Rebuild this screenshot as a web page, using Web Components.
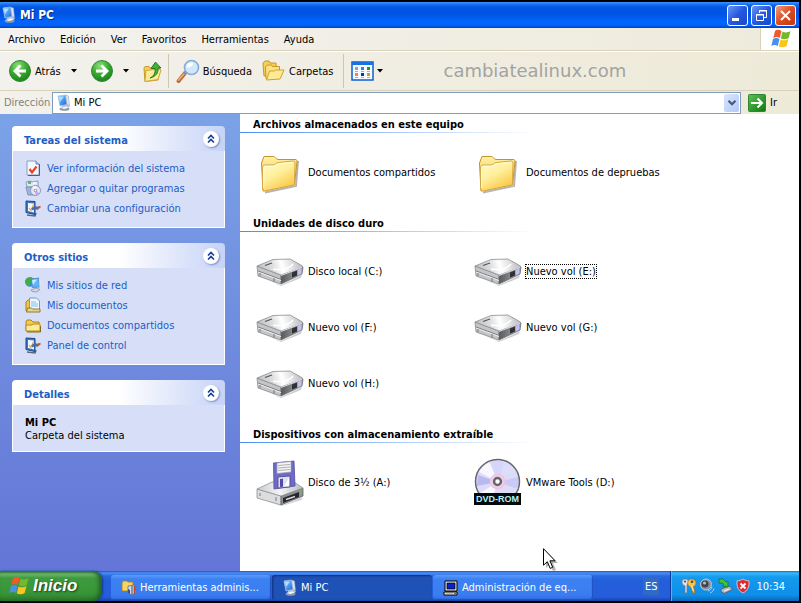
<!DOCTYPE html>
<html lang="es">
<head>
<meta charset="utf-8">
<meta name="viewport" content="width=device-width, initial-scale=1">
<title>Mi PC</title>
<style>
  body {
    margin: 0;
    background: #000;
    font: 11px/15px "DejaVu Sans Condensed", "DejaVu Sans", sans-serif;
    color: #000;
    cursor: default;
  }
</style>
</head>
<body>
<xp-desktop>
  <title-bar slot="window">Mi PC</title-bar>
  <menu-bar slot="window"></menu-bar>
  <tool-bar slot="window"></tool-bar>
  <address-bar slot="window"></address-bar>
  <explorer-view slot="window">
    <task-pane slot="side" heading="Tareas del sistema">
      <task-link icon="info">Ver información del sistema</task-link>
      <task-link icon="programs">Agregar o quitar programas</task-link>
      <task-link icon="settings">Cambiar una configuración</task-link>
    </task-pane>
    <task-pane slot="side" heading="Otros sitios">
      <task-link icon="network">Mis sitios de red</task-link>
      <task-link icon="documents">Mis documentos</task-link>
      <task-link icon="smallfolder">Documentos compartidos</task-link>
      <task-link icon="settings">Panel de control</task-link>
    </task-pane>
    <task-pane slot="side" heading="Detalles">
      <pane-details name="Mi PC">Carpeta del sistema</pane-details>
    </task-pane>

    <file-group heading="Archivos almacenados en este equipo">
      <file-item icon="folder">Documentos compartidos</file-item>
      <file-item icon="folder">Documentos de depruebas</file-item>
    </file-group>
    <file-group heading="Unidades de disco duro">
      <file-item icon="drive">Disco local (C:)</file-item>
      <file-item icon="drive" focused>Nuevo vol (E:)</file-item>
      <file-item icon="drive">Nuevo vol (F:)</file-item>
      <file-item icon="drive">Nuevo vol (G:)</file-item>
      <file-item icon="drive">Nuevo vol (H:)</file-item>
    </file-group>
    <file-group heading="Dispositivos con almacenamiento extraíble">
      <file-item icon="floppy">Disco de 3½ (A:)</file-item>
      <file-item icon="dvd">VMware Tools (D:)</file-item>
    </file-group>
  </explorer-view>

  <task-bar slot="taskbar">
    <task-button icon="tools">Herramientas adminis...</task-button>
    <task-button icon="computer" active>Mi PC</task-button>
    <task-button icon="oldpc">Administración de eq...</task-button>
  </task-bar>
</xp-desktop>

<script>
// Each entry: [width, height, svg content]
const ICONS = {
  computer: [16, 16, `
    <defs><linearGradient id="s" x1="0" y1="0" x2="1" y2="1"><stop offset="0" stop-color="#a9dcff"/><stop offset=".5" stop-color="#4a9bf2"/><stop offset="1" stop-color="#1f5fd0"/></linearGradient></defs>
    <ellipse cx="8.500" cy="14" rx="5" ry="1.800" fill="#8d98a8"/>
    <path d="M7 10l5-1 2 3-5 2-4-1z" fill="#b9c2d2"/>
    <path d="M2 1l7.500-1 1.500 9.500-7 1.500z" fill="url(#s)" stroke="#a9c2e8" stroke-width=".8"/>
    <path d="M9.500 0l3 1 1 9.500-2.500-1z" fill="#dfe6f2" stroke="#8797b5" stroke-width=".5"/>
    <path d="M3 2l5-.6L4 7z" fill="#d2f0ff" opacity=".7"/>
    <path d="M5 13l5-1.500 3 .8-5 1.800z" fill="#f4f6fa"/>`],
  flag: [20, 20, `
    <path d="M4 2C6 0 8 .5 10.500 2L8.800 9C6.500 7.600 4.500 7.600 2.300 9z" fill="#f0592b"/>
    <path d="M11.500 2.500c2.500 1.300 5 1.300 8-.5L17.700 9c-2.600 1.600-5 1.600-7.900.4z" fill="#76b82a"/>
    <path d="M2 10c2.200-1.400 4.300-1.300 6.500 0L6.800 17C4.600 15.600 2.500 15.600.3 17z" fill="#4a8fe8"/>
    <path d="M9.500 10.400c2.800 1.300 5.200 1.300 7.900-.4l-1.700 7c-2.700 1.600-5 1.600-7.900.5z" fill="#fbc51d"/>`],
  back: [24, 24, `
    <defs><radialGradient id="g" cx=".4" cy=".25" r=".8"><stop offset="0" stop-color="#8fe07a"/><stop offset=".5" stop-color="#38ab30"/><stop offset="1" stop-color="#187d18"/></radialGradient></defs>
    <circle cx="12" cy="12" r="10.500" fill="url(#g)" stroke="#35893a"/>
    <path d="M12.500 6.500L7 12l5.500 5.500M7.500 12H18" fill="none" stroke="#fff" stroke-width="2.800"/>`],
  forward: [24, 24, `
    <defs><radialGradient id="g" cx=".4" cy=".25" r=".8"><stop offset="0" stop-color="#8fe07a"/><stop offset=".5" stop-color="#38ab30"/><stop offset="1" stop-color="#187d18"/></radialGradient></defs>
    <circle cx="12" cy="12" r="10.500" fill="url(#g)" stroke="#35893a"/>
    <path d="M11.500 6.500L17 12l-5.500 5.500M16.500 12H6" fill="none" stroke="#fff" stroke-width="2.800"/>`],
  up: [20, 24, `
    <path d="M2 9l1-1.500h4l1 1.500 9-1 1 3-2 10-13 1.500z" fill="#f3cf57" stroke="#c79a26"/>
    <path d="M4 11.500L17 10l2 1-3 9.500-13 2z" fill="#fdeb9a" stroke="#d3a636"/>
    <path d="M8 19c4-2 5.500-5 5-9.500H9L13.500 3 19 9h-3c.5 5-2 8.500-8 10z" fill="#3fb238" stroke="#176b16" stroke-width=".8"/>`],
  search: [24, 24, `
    <path d="M9 14L2.500 22" stroke="#b06a3c" stroke-width="4" stroke-linecap="round"/>
    <path d="M9 13.500L2.500 21" stroke="#eda262" stroke-width="2" stroke-linecap="round"/>
    <path d="M11 12l-3 3" stroke="#7f93bb" stroke-width="3"/>
    <circle cx="15.500" cy="8.500" r="7" fill="#cfe9fb" stroke="#8aa8d8" stroke-width="1.600"/>
    <path d="M10.500 8a5 5 0 0 1 7-4c-1 3-3 5-7 4z" fill="#fff"/>`],
  folders: [24, 22, `
    <path d="M1 3l2-2h4l1 2h6v3L12 16H2z" fill="#f5cf56" stroke="#c99722"/>
    <path d="M3.500 7l2-2h4l1 1.500h7v4l-3 8H4z" fill="#fbe184" stroke="#c99722"/>
    <path d="M4.500 20l3-9h5l1-1 8.500 0-4 9z" fill="#fdea94" stroke="#d2a02c"/>`],
  views: [24, 20, `
    <rect x="1" y="1" width="21" height="18" fill="#f5faff" stroke="#0a5fd0" stroke-width="1.500"/>
    <rect x="1" y="1" width="21" height="3" fill="#1672e6"/>
    <path d="M4 6h3v3H4z" fill="#9a94d0"/><path d="M10 6h3v3h-3z" fill="#2b83e8"/><path d="M16 6h3v3h-3z" fill="#1c9a1c"/>
    <path d="M4 12h3v3H4z" fill="#ff7b4c"/><path d="M10 12h3v3h-3z" fill="#0d369c"/><path d="M16 12h3v3h-3z" fill="#d69c08"/>
    <path d="M4 10h3v1H4zm6 0h3v1h-3zm6 0h3v1h-3zM4 16h3v1H4zm6 0h3v1h-3zm6 0h3v1h-3z" fill="#a8b0ba"/>`],
  arrow: [6, 4, `<path d="M0 0h6L3 3.500z"/>`],
  combo: [8, 6, `<path d="M.5.800L4 4.300 7.500.8" fill="none" stroke="#3f577e" stroke-width="2"/>`],
  go: [18, 18, `
    <defs><linearGradient id="g" x1="0" y1="0" x2="1" y2="1"><stop offset="0" stop-color="#5cc254"/><stop offset="1" stop-color="#0f7713"/></linearGradient></defs>
    <rect x=".5" y=".5" width="17" height="17" rx="1" fill="url(#g)" stroke="#2b8a2f"/>
    <path d="M3 9h11M9.500 4.500L14 9l-4.500 4.500" fill="none" stroke="#fff" stroke-width="2"/>`],
  chevrons: [8, 10, `<path d="M1 4.500l3-3 3 3M1 8.500l3-3 3 3" fill="none" stroke="#163d9c" stroke-width="1.600"/>`],
  info: [16, 16, `
    <path d="M2 1h9l3 3v11H2z" fill="#f3f7ff" stroke="#8d9bc0"/><path d="M11 1v3h3" fill="#bcc9e8" stroke="#6f81ad"/>
    <path d="M14.500 4v11.500H3" fill="none" stroke="#4a5b86"/>
    <path d="M4.500 9l2.500 3.500 4.500-6" fill="none" stroke="#f04018" stroke-width="2.200"/>`],
  programs: [16, 16, `
    <path d="M1 2l4-1 2 1 6-1v6H2z" fill="#dfe8f5" stroke="#8ba0c6"/>
    <path d="M3 1h3v3H3z" fill="#6ab36c"/><path d="M8 2h3v2H8z" fill="#f6f6f6"/>
    <path d="M1 7h9v8H3z" fill="#9db6da" stroke="#7e94b9"/>
    <circle cx="10.500" cy="10.500" r="5" fill="#e6e4f8" stroke="#8f94bb"/>
    <path d="M10.500 10.500l-3-4h4z" fill="#fff"/><path d="M10.500 10.500l4 3-4 2z" fill="#b6aee6"/>
    <circle cx="10.500" cy="10.500" r="1.300" fill="#fff" stroke="#888"/>`],
  settings: [16, 16, `
    <path d="M2 15l8 1 1-3" fill="none" stroke="#56658a" stroke-width="1.500"/>
    <path d="M1 1l9 .5v13l-9-2z" fill="#3d76c9" stroke="#1c4587"/><path d="M3 3l6 .5v9L3 11z" fill="#f4f9ff"/>
    <path d="M4 8l2 2.500 2.500-6" fill="none" stroke="#dfb456" stroke-width="1.300"/>
    <path d="M7 9.500l3-2.500 2 1.500 2-1.500" fill="none" stroke="#4a6ba5" stroke-width="2.400"/>
    <path d="M12 8.500l3.500-2" stroke="#c8502c" stroke-width="1.600"/>`],
  network: [16, 16, `
    <circle cx="5" cy="5" r="4.800" fill="#3d8fe0"/><path d="M0 4c1-4 6-5 8-2.500L5 7 3 9C1 8 0 6 0 4z" fill="#3fae43"/>
    <path d="M6 2l8-1 .5 9-7 .5z" fill="#5fb4fa" stroke="#4b7cc6" stroke-width=".8"/><path d="M7 3l5-.6L8 8z" fill="#c6ebff"/>
    <path d="M14 1l1.500 1v8h-1z" fill="#e4e8f2"/>
    <path d="M6 13l5-2 4 1.500-3 2.500-5-.5z" fill="#cfd5e2" stroke="#707c98" stroke-width=".6"/>`],
  documents: [16, 16, `
    <path d="M1 5l2-2h3v11H1z" fill="#f0c748" stroke="#ad8018"/>
    <path d="M4.500 1h7l3 3v9h-10z" fill="#eff7ff" stroke="#6f9ace"/><path d="M6 5h5M6 7h7M6 9h7" stroke="#7cc0f0"/>
    <path d="M1.500 15l1-4h4l1 1h7.500v3z" fill="#e8d48a" stroke="#8f7a34"/>`],
  smallfolder: [16, 16, `
    <path d="M1 5l1-2h4l2 2h6v9H1z" fill="#f2ca4d" stroke="#b38216"/>
    <path d="M1 14V8h6l1-1h7v7z" fill="#fdea95" stroke="#b98a1f"/><path d="M2 15h13.500V9" fill="none" stroke="#8a6a16"/>`],
  tools: [16, 16, `
    <path d="M1 3l1-2h4l1 1h5v9H1z" fill="#f5d465" stroke="#a67f1c" stroke-width=".8"/>
    <path d="M7 6l7-1 1 8-4 2-4-2z" fill="#d6dbe5" stroke="#5d6a85" stroke-width=".8"/>
    <path d="M13.500 6v8" stroke="#c43f24" stroke-width="1.600"/><path d="M11 6v9" stroke="#5b76a4" stroke-width="1.400"/>
    <path d="M7 9l2 1v4l-2-1z" fill="#39568c"/>`],
  oldpc: [16, 16, `
    <path d="M2 1h12v10H2z" fill="#e9e7df" stroke="#000"/><path d="M4 3h8v6H4z" fill="#0b20c8" stroke="#000" stroke-width=".7"/>
    <path d="M1 12h13v3H1z" fill="#f2f0e8" stroke="#000"/><path d="M3 14h7" stroke="#888"/><path d="M11 13.500h2" stroke="#1a9a1a"/>`],
  keys: [16, 16, `
    <path d="M4 1c3 0 4 2 3.500 4L6 7v8H4V8C2 7 1 6 1 4s1-3 3-3z" fill="#dde1e8" stroke="#6d7686" stroke-width=".7"/>
    <circle cx="4" cy="3.500" r="1.100" fill="#47526b"/>
    <path d="M10.500 1c3 0 4.500 2 4.500 4s-1 3-2.500 3.500L14 15h-2L9.500 9C7.500 8 6.500 6.500 6.700 4.500 7 2 8.500 1 10.500 1z" fill="#f5c252" stroke="#9a6a1c" stroke-width=".7"/>
    <circle cx="11" cy="3.800" r="1.300" fill="#5a4a38"/><path d="M10.500 7l2 6" stroke="#fff0bd" stroke-width=".8"/>`],
  sound: [16, 16, `
    <circle cx="7" cy="6.500" r="5.500" fill="#8c929c" stroke="#c2c8d1"/><circle cx="6" cy="6" r="3.600" fill="#3f4651"/>
    <circle cx="5.500" cy="5" r="1.600" fill="#b6bcc7"/><path d="M9 13c2-.4 3.500-2 4-4M11 15c2-.6 3.600-2.400 4-4.500" fill="none" stroke="#b9cdf8"/>`],
  eject: [16, 16, `
    <path d="M4 11l8-3 3 2v2l-8 3.500-3-2z" fill="#aeb5bf" stroke="#4c5561" stroke-width=".8"/><path d="M7 13l5-2" stroke="#fff"/>
    <path d="M2 1h4l3 3 2-1v6L5.500 8 7 6.500 5 5H2z" fill="#42c438" stroke="#187318" stroke-width=".8"/>`],
  shield: [16, 16, `
    <path d="M8 1C10 2.300 12 2.900 14 2.800 14.500 9 12.500 12.700 8 15 3.500 12.700 1.500 9 2 2.800 4 2.900 6 2.300 8 1z" fill="#e02c30" stroke="#f6cfd0" stroke-width=".8"/>
    <path d="M5.500 5.500l5 5m0-5l-5 5" stroke="#fff" stroke-width="1.800"/>`],
  folder: [48, 48, `
    <defs><linearGradient id="f" x1="0" y1="0" x2=".6" y2="1"><stop offset="0" stop-color="#fffbc8"/><stop offset=".5" stop-color="#fff09e"/><stop offset="1" stop-color="#fbc844"/></linearGradient>
    <linearGradient id="b" x1="0" y1="0" x2="0" y2="1"><stop offset="0" stop-color="#fff2a6"/><stop offset="1" stop-color="#edb62f"/></linearGradient></defs>
    <path d="M9 44.500L40 38l2-25" fill="none" stroke="#777" stroke-width="2" opacity=".55"/>
    <path d="M5.500 15L8 8.500h9.500c1.500 0 2.500 2.500 4.500 3h17c1.500 0 2 .5 2 2L38.500 36.500 7 43z" fill="url(#b)" stroke="#bf922f"/>
    <path d="M6.500 20c0-2 1-3 3-3H17c2 0 3-2.500 5.500-2.500L37 13c1.500 0 2 .5 2 2l-.5 20.500c0 1-.5 1.500-1.500 1.700L8.500 43c-1 0-1.500-.5-1.500-1.500z" fill="url(#f)" stroke="#d8a63c"/>
    <path d="M7.700 40V20c0-1 1-1.700 2-1.700h8c2 0 3-2.300 5-2.500l14-1.300" fill="none" stroke="#fffde6"/>`],
  drive: [48, 48, `
    <defs><linearGradient id="t" x1="0" y1=".5" x2="1" y2=".4"><stop offset="0" stop-color="#bfc0c2"/><stop offset=".35" stop-color="#dedfe0"/><stop offset=".55" stop-color="#fff"/><stop offset=".8" stop-color="#dcdcde"/><stop offset="1" stop-color="#b9bbbe"/></linearGradient>
    <linearGradient id="r" x1="0" x2="1"><stop offset="0" stop-color="#56585c"/><stop offset=".5" stop-color="#85878b"/><stop offset="1" stop-color="#8d8e9c"/></linearGradient></defs>
    <path d="M4 29l21 9 21-10-1 3-20 8z" fill="#888" opacity=".4"/>
    <path d="M1 19l24 9v9L2 29z" fill="#c4c5c7" stroke="#898b8e" stroke-width=".8"/>
    <path d="M25 28l22-8-1 7-21 10z" fill="url(#r)" stroke="#6d6f74" stroke-width=".8"/>
    <path d="M1 19l16-6.500L34 12l12.500 7v1.500L25 28z" fill="url(#t)" stroke="#8b8d90" stroke-width=".8"/>
    <path d="M2 24l23 8.500" stroke="#77797d"/><path d="M2 25l23 8.500" stroke="#eeeeef"/>
    <path d="M25 28.500l21-8" stroke="#dcdde0"/>
    <path d="M36 25.500l5-2v5l-5 2z" fill="#303137"/><path d="M41.500 23l4-1.500v5l-4 2z" fill="#c3c0f2"/>
    <path d="M9 18.500l7-2.500" stroke="#515357" stroke-width="1.200"/><path d="M17 22c8 1.500 16 0 20-5" fill="none" stroke="#fff" stroke-width="1.500"/>
    <path d="M4 26v3M18 31v4" stroke="#77797d"/>`],
  floppy: [48, 48, `
    <defs><linearGradient id="t" x1="0" x2="1"><stop offset="0" stop-color="#c9cbcd"/><stop offset=".5" stop-color="#f5f5f6"/><stop offset="1" stop-color="#b9bbbf"/></linearGradient></defs>
    <path d="M4 41l21 7 22-9-2 3-19 6z" fill="#888" opacity=".4"/>
    <path d="M1 31l24 7v9L1 40z" fill="#dcddde" stroke="#8d8f92" stroke-width=".8"/>
    <path d="M25 38l22-8v8L25 47z" fill="#8f9195" stroke="#606267" stroke-width=".8"/>
    <path d="M1 31l15-7h22l9 6-22 8z" fill="url(#t)" stroke="#929498" stroke-width=".8"/>
    <path d="M27 40l16-6v5l-16 6z" fill="#26272c"/><path d="M30 41.500l9-3" stroke="#d4d6d9" stroke-width="1.500"/><circle cx="44.500" cy="33" r="1" fill="#4cd63c"/>
    <path d="M4 35v3M20 39v4" stroke="#7b7d80"/>
    <path d="M17.500 5L38 3l1 25-21 3z" fill="#6f6bc8" stroke="#504c9c" stroke-width=".8"/>
    <path d="M21 5l14-1.500V14l-14 1.500z" fill="#f6f6f6" stroke="#9c9cb2" stroke-width=".7"/>
    <path d="M22 7.500l12-1M22 10l12-1M22 12.500l12-1" stroke="#b0b0b4"/>
    <path d="M22 19l12-1v11l-12 1z" fill="#dfe0ee" stroke="#4a458c" stroke-width=".8"/><path d="M24 21l3-.3v8l-3 .3z" fill="#514ca8"/><path d="M28 28l5-8v7.500z" fill="#fff"/>`],
  dvd: [48, 48, `
    <circle cx="23.500" cy="23.500" r="22" fill="#dcdcf7" stroke="#65666c" stroke-width="1.500"/>
    <path d="M24 24L5 14a21 21 0 0 1 11-9.500z" fill="#f7f8ff"/><path d="M24 24L30 4a21 21 0 0 1 11 8z" fill="#dddcfb"/>
    <path d="M24 24L16 4.500a21 21 0 0 1 14-1z" fill="#d6d5fa"/><path d="M24 24L4 17 3 28z" fill="#b9b8f3"/><path d="M24 24l20-5v12z" fill="#cbcaf7"/>
    <path d="M24 24L6 35h14z" fill="#f8f8ff"/>
    <circle cx="23.500" cy="23.500" r="7" fill="#ead7ef" stroke="#f4bfe0" stroke-width="1.500"/><circle cx="23.500" cy="23.500" r="3.500" fill="#fff" stroke="#666" stroke-width="2.500"/>
    <rect y="35" width="47" height="12" fill="#04090c"/>
    <text x="23.500" y="44" text-anchor="middle" font-family="Liberation Sans, Arial, sans-serif" font-size="9" font-weight="700" fill="#b5f0f4">DVD-ROM</text>`],
  pointer: [16, 24, `
    <path d="M3 3v17l4-4 3 7 3-1-3-7h5z" fill="#000" opacity=".3"/>
    <path d="M.5.700v16.500l3.800-3.500 2.900 6.700 2.500-1.100-2.800-6.500h5.200z" fill="#fff" stroke="#000"/>`]
};

class XpIcon extends HTMLElement {
  connectedCallback() {
    if (this.shadowRoot) return;
    const [w, h, body] = ICONS[this.getAttribute('name')];
    this.attachShadow({ mode: 'open' }).innerHTML = `
      <style>
        :host { display: inline-flex; flex: none; }
        svg { display: block; overflow: visible; }
      </style>
      <svg width="${w}" height="${h}" viewBox="0 0 ${w} ${h}" aria-hidden="true">${body}</svg>
    `;
  }
}

// Small helper base: subclasses return their markup from render()
class XpElement extends HTMLElement {
  connectedCallback() {
    if (this.shadowRoot) return;
    this.attachShadow({ mode: 'open' }).innerHTML = `
      <style>
        button, input, a { font: inherit; color: inherit; margin: 0; }
        button { border: 0; padding: 0; background: none; }
        a { text-decoration: none; }
      </style>
      ${this.render()}
    `;
  }
}

class XpDesktop extends XpElement {
  render() {
    return `
      <style>
        :host {
          display: flex;
          flex-direction: column;
          box-sizing: border-box;
          min-height: 100vh;
          padding: 2px 2px 2px 0;
        }
        main { display: flex; flex-direction: column; flex: 1; }
      </style>
      <main><slot name="window"></slot></main>
      <slot name="taskbar"></slot>
    `;
  }
}

class TitleBar extends XpElement {
  render() {
    return `
      <style>
        :host {
          display: flex;
          align-items: center;
          gap: 3px;
          height: 26px;
          padding: 0 3px 0 1px;
          background: linear-gradient(#3d95ff 0, #1068ee 3px, #0055e0 6px, #0054e3 12px, #0066ff 20px, #0064fa 23px, #0042c0 26px);
        }
        h1 {
          flex: 1;
          margin: 0;
          font-size: 12px;
          line-height: 16px;
          color: #fff;
          text-shadow: 1px 1px #0a2a7c;
        }
        button {
          width: 21px;
          height: 21px;
          box-sizing: border-box;
          border: 1px solid #fff;
          border-radius: 3px;
          background: linear-gradient(135deg, #6d96f4, #2558e0 50%, #1a48c8);
        }
        .close { background: linear-gradient(135deg, #f0a080, #dd4a22 50%, #c03610); }
        svg { display: block; fill: none; stroke: #fff; }
      </style>
      <xp-icon name="computer"></xp-icon>
      <h1><slot></slot></h1>
      <button aria-label="Minimizar"><svg width="19" height="19"><path d="M4 13.500h7" stroke-width="3"/></svg></button>
      <button aria-label="Restaurar"><svg width="19" height="19"><path d="M7.500 7V4.500h7v7H12M7 5h8M4.500 8.500h7v6h-7zM4 9h8"/></svg></button>
      <button class="close" aria-label="Cerrar"><svg width="19" height="19"><path d="M5 5l9 9m0-9l-9 9" stroke-width="2"/></svg></button>
    `;
  }
}

class MenuBar extends XpElement {
  render() {
    const items = ['Archivo', 'Edición', 'Ver', 'Favoritos', 'Herramientas', 'Ayuda'];
    return `
      <style>
        :host {
          display: flex;
          height: 22px;
          border-bottom: 1px solid #d8d2bd;
          background: linear-gradient(90deg, #f3f2ef, #eeeadb);
        }
        nav { display: flex; flex: 1; gap: 15px; padding-left: 8px; }
        .logo {
          display: flex;
          align-items: center;
          width: 28px;
          padding-left: 10px;
          border-left: 1px solid #d8d2bd;
          background: #fff;
        }
      </style>
      <nav>${items.map(i => `<button>${i}</button>`).join('')}</nav>
      <div class="logo"><xp-icon name="flag"></xp-icon></div>
    `;
  }
}

class ToolBar extends XpElement {
  render() {
    return `
      <style>
        :host {
          display: flex;
          align-items: center;
          height: 38px;
          padding-left: 8px;
          border-top: 1px solid #fff;
          border-bottom: 1px solid #d8d2bd;
          background: linear-gradient(90deg, #f2f1ec, #eeead8);
        }
        button { display: flex; align-items: center; gap: 3px; height: 24px; }
        .label { padding-right: 4px; }
        .label + .label { margin-left: 6px; }
        .drop { width: 6px; justify-content: center; margin: 0 13px 0 9px; }
        .label + .drop { margin-left: 6px; }
        .view { margin: 0 0 0 2px; }
        hr { width: 1px; height: 34px; margin: 0 7px 0 6px; border: 0; background: #cdc8b2; }
        .mark {
          margin-left: 60px;
          font: 18px/22px "DejaVu Sans", sans-serif;
          color: #a3a3a0;
        }
      </style>
      <button class="label"><xp-icon name="back"></xp-icon>Atrás</button>
      <button class="drop" aria-label="Historial atrás"><xp-icon name="arrow"></xp-icon></button>
      <button aria-label="Adelante"><xp-icon name="forward"></xp-icon></button>
      <button class="drop" aria-label="Historial adelante"><xp-icon name="arrow"></xp-icon></button>
      <button aria-label="Arriba"><xp-icon name="up"></xp-icon></button>
      <hr>
      <button class="label"><xp-icon name="search"></xp-icon>Búsqueda</button>
      <button class="label"><xp-icon name="folders"></xp-icon>Carpetas</button>
      <hr>
      <button aria-label="Vistas"><xp-icon name="views"></xp-icon></button>
      <button class="drop view" aria-label="Elegir vista"><xp-icon name="arrow"></xp-icon></button>
      <span class="mark">cambiatealinux.com</span>
    `;
  }
}

class AddressBar extends XpElement {
  render() {
    return `
      <style>
        :host {
          display: flex;
          align-items: center;
          height: 23px;
          padding-left: 4px;
          background: linear-gradient(90deg, #f2f1ec, #eeead8);
        }
        label { width: 48px; color: #85827a; }
        .combo {
          display: flex;
          align-items: center;
          flex: 1;
          box-sizing: border-box;
          height: 22px;
          padding: 1px 1px 1px 3px;
          border: 1px solid #7f9db9;
          background: #fff;
        }
        input { flex: 1; min-width: 0; padding: 0 0 0 2px; border: 0; outline: 0; background: none; }
        .drop {
          display: flex;
          align-items: center;
          justify-content: center;
          width: 15px;
          height: 18px;
          border-radius: 2px;
          background: linear-gradient(135deg, #dbe6fe, #b2c8f7);
        }
        .go { display: flex; align-items: center; gap: 4px; width: 51px; margin-left: 7px; }
      </style>
      <label for="address">Dirección</label>
      <div class="combo">
        <xp-icon name="computer"></xp-icon>
        <input id="address" type="text" value="Mi PC">
        <button class="drop" aria-label="Mostrar lista"><xp-icon name="combo"></xp-icon></button>
      </div>
      <button class="go"><xp-icon name="go"></xp-icon>Ir</button>
    `;
  }
}

class ExplorerView extends XpElement {
  render() {
    return `
      <style>
        :host { display: flex; flex: 1; background: #fff; }
        aside {
          display: flex;
          flex-direction: column;
          gap: 15px;
          box-sizing: border-box;
          width: 240px;
          padding: 12px 15px 12px 12px;
          background: linear-gradient(#7ba2e7, #6375d6);
        }
        section { position: relative; flex: 1; padding-top: 3px; }
        .pointer { position: absolute; left: 303px; top: 434px; }
      </style>
      <aside><slot name="side"></slot></aside>
      <section>
        <slot></slot>
        <xp-icon class="pointer" name="pointer"></xp-icon>
      </section>
    `;
  }
}

class TaskPane extends XpElement {
  render() {
    return `
      <style>
        :host { display: block; }
        header {
          display: flex;
          align-items: center;
          justify-content: space-between;
          height: 25px;
          padding: 0 6px 0 12px;
          border-radius: 4px 4px 0 0;
          background: linear-gradient(90deg, #fff 50%, #c6d3f7);
        }
        h2 { margin: 0; padding-top: 3px; font-size: 11px; color: #215dc6; }
        button {
          display: flex;
          align-items: center;
          justify-content: center;
          width: 16px;
          height: 16px;
          border-radius: 50%;
          background: #fff;
          box-shadow: 1px 1px 2px #7b8fc0;
        }
        .body {
          padding: 7px 11px 9px;
          border: 1px solid #fff;
          border-top: 0;
          background: #d6dff7;
        }
      </style>
      <header>
        <h2>${this.getAttribute('heading')}</h2>
        <button aria-label="Contraer"><xp-icon name="chevrons"></xp-icon></button>
      </header>
      <div class="body"><slot></slot></div>
    `;
  }
}

class TaskLink extends XpElement {
  render() {
    return `
      <style>
        :host { display: block; }
        a { display: flex; align-items: center; gap: 6px; height: 20px; padding-left: 1px; color: #215dc6; white-space: nowrap; }
      </style>
      <a href="#"><xp-icon name="${this.getAttribute('icon')}"></xp-icon><span><slot></slot></span></a>
    `;
  }
}

class PaneDetails extends XpElement {
  render() {
    return `
      <style>
        :host { display: block; padding: 4px 1px 0; line-height: 13px; }
        strong { display: block; }
      </style>
      <strong>${this.getAttribute('name')}</strong>
      <slot></slot>
    `;
  }
}

class FileGroup extends XpElement {
  render() {
    return `
      <style>
        :host { display: block; margin-bottom: 16px; }
        h2 {
          margin: 0 0 11px;
          padding: 0 0 1px 13px;
          font-size: 11px;
          background: linear-gradient(90deg, #4a8df0, #fff 296px) bottom / 100% 1px no-repeat;
        }
        .items { display: grid; grid-template-columns: repeat(2, 218px); grid-auto-rows: 56px; padding-left: 16px; }
      </style>
      <h2>${this.getAttribute('heading')}</h2>
      <div class="items"><slot></slot></div>
    `;
  }
}

class FileItem extends XpElement {
  render() {
    return `
      <style>
        :host { display: flex; align-items: center; }
        a { display: flex; align-items: center; gap: 3px; white-space: nowrap; }
        span { padding: 0 1px; }
        :host([focused]) span { outline: 1px dotted #000; outline-offset: -1px; }
      </style>
      <a href="#"><xp-icon name="${this.getAttribute('icon')}"></xp-icon><span><slot></slot></span></a>
    `;
  }
}

class TaskBar extends XpElement {
  render() {
    return `
      <style>
        :host {
          display: flex;
          height: 30px;
          background: linear-gradient(#1f52c8 0, #4a90f5 2px, #2a68e0 5px, #245edb 10px, #245edb 26px, #1941a5 30px);
          color: #fff;
        }
        .start {
          display: flex;
          align-items: center;
          gap: 4px;
          box-sizing: border-box;
          width: 102px;
          padding-left: 9px;
          border-radius: 0 9px 9px 0;
          background: linear-gradient(#2f7a30 0, #6fb86c 3px, #3f9a3f 7px, #379637 22px, #2c7a2c 30px);
          box-shadow: inset -3px 0 4px #1f5f22, 1px 0 2px #123a90;
          font: italic bold 17px/22px "Liberation Sans", Arial, sans-serif;
          text-shadow: 1px 1px 2px #1b3b1b;
        }
        .tasks { display: flex; flex: 1; gap: 1px; min-width: 0; padding: 4px 0 1px 9px; }
        .lang { align-self: center; padding: 1px 2px; margin: 0 11px; background: #316ac5; }
        .tray {
          display: flex;
          align-items: center;
          gap: 2px;
          padding: 0 14px 0 10px;
          border-left: 1px solid #0b3a9c;
          background: linear-gradient(#0f6fd0 0, #39b6f8 2px, #149aee 6px, #0f8fe8 24px, #0a66b8 30px);
          box-shadow: inset 1px 0 #35c3fb;
        }
        time { margin-left: 3px; }
      </style>
      <button class="start"><xp-icon name="flag"></xp-icon>Inicio</button>
      <div class="tasks"><slot></slot></div>
      <span class="lang">ES</span>
      <div class="tray">
        <xp-icon name="keys"></xp-icon>
        <xp-icon name="sound"></xp-icon>
        <xp-icon name="eject"></xp-icon>
        <xp-icon name="shield"></xp-icon>
        <time>10:34</time>
      </div>
    `;
  }
}

class TaskButton extends XpElement {
  render() {
    return `
      <style>
        :host { display: flex; flex: 0 1 160px; min-width: 0; }
        button {
          display: flex;
          align-items: center;
          gap: 3px;
          flex: 1;
          min-width: 0;
          padding: 0 8px 0 10px;
          border-radius: 3px;
          background: linear-gradient(#5c9cfb 0, #3c81f3 4px, #3a7df0 20px, #2f6ce0);
          box-shadow: inset -1px -1px 1px #1f50bd;
          white-space: nowrap;
        }
        :host([active]) button {
          background: #1e52b7;
          box-shadow: inset 1px 1px 2px #0e2f80;
        }
      </style>
      <button><xp-icon name="${this.getAttribute('icon')}"></xp-icon><span><slot></slot></span></button>
    `;
  }
}

customElements.define('xp-icon', XpIcon);
customElements.define('xp-desktop', XpDesktop);
customElements.define('title-bar', TitleBar);
customElements.define('menu-bar', MenuBar);
customElements.define('tool-bar', ToolBar);
customElements.define('address-bar', AddressBar);
customElements.define('explorer-view', ExplorerView);
customElements.define('task-pane', TaskPane);
customElements.define('task-link', TaskLink);
customElements.define('pane-details', PaneDetails);
customElements.define('file-group', FileGroup);
customElements.define('file-item', FileItem);
customElements.define('task-bar', TaskBar);
customElements.define('task-button', TaskButton);
</script>
</body>
</html>
